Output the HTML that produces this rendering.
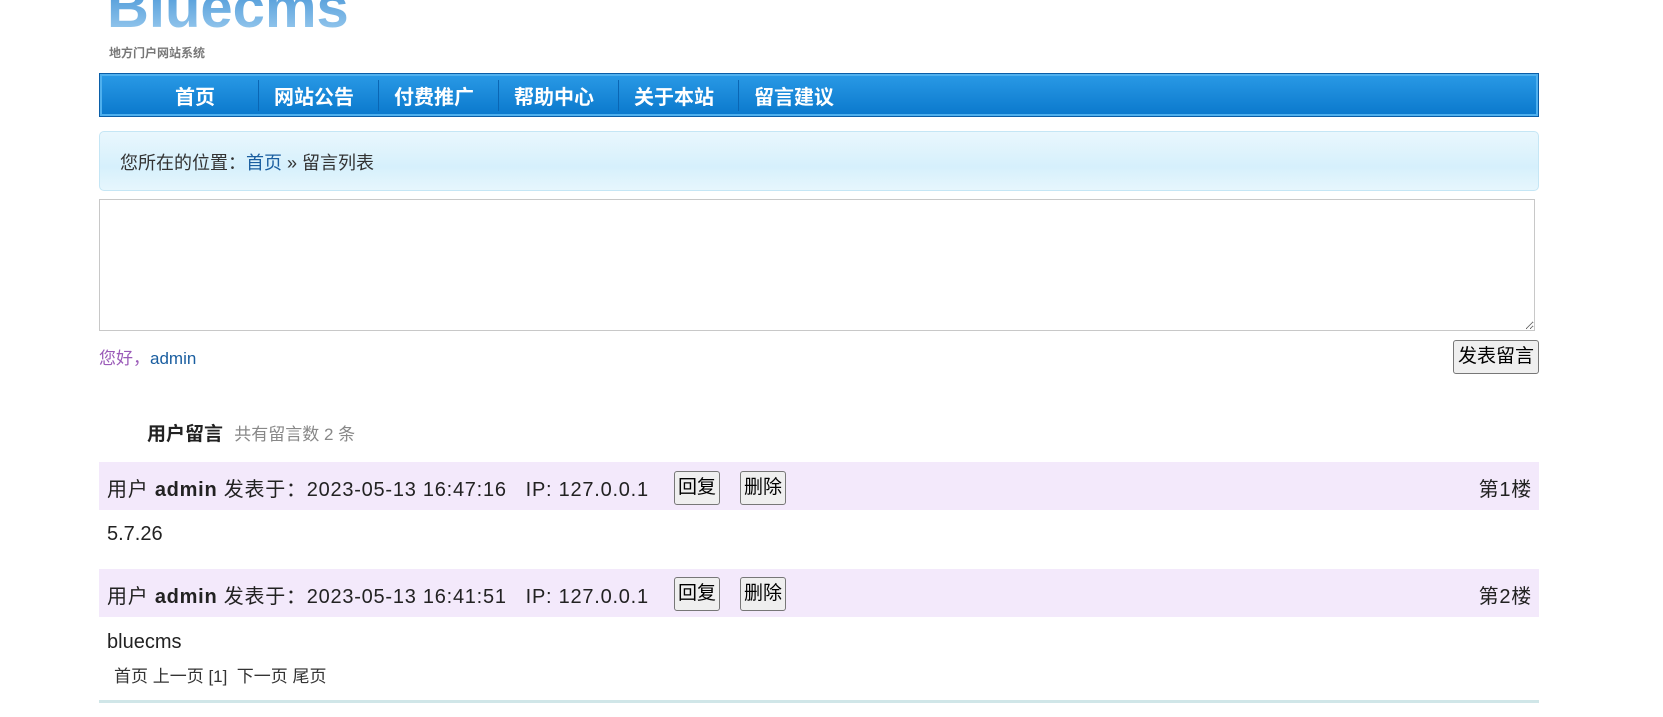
<!DOCTYPE html>
<html><head><meta charset="utf-8"><style>
*{margin:0;padding:0;box-sizing:border-box}
body{width:1663px;height:717px;background:#fff;font-family:"Liberation Sans","Noto Sans CJK SC",sans-serif;color:#333;position:relative;overflow:hidden}
.abs{position:absolute}
.logo{left:107px;top:-26px;font:bold 58px "Liberation Sans",sans-serif;background:linear-gradient(#2f86cf,#a6d2f2);-webkit-background-clip:text;background-clip:text;color:transparent}
.sub{left:109px;top:44px;font-size:12px;color:#777;font-weight:bold}
.nav{left:99px;top:73px;width:1440px;height:44px;background:linear-gradient(#2a9ae6,#0a78cc);border:1px solid #0a5ea8;box-shadow:inset 0 0 0 2px #4fb0ee}
.nav span{position:absolute;top:7px;color:#fff;font-weight:bold;font-size:20px}
.sep{position:absolute;top:6px;width:1px;height:31px;background:#4aa8ea;border-right:1px solid #0a66b4}
.bc{left:99px;top:131px;width:1440px;height:60px;border:1px solid #c5e6f5;border-radius:5px;background:linear-gradient(#e9f7fd,#d6f0fc 60%,#e6f6fd);font-size:18px;padding:17px 0 0 20px}
.bc a{color:#1a5ea0;text-decoration:none}
textarea{position:absolute;left:99px;top:199px;width:1436px;height:132px;border:1px solid #c8c8c8}
.btn{position:absolute;border:1px solid #777;border-radius:3px;background:#efefef;font-size:19px;color:#000;text-align:center}
.row{position:absolute;left:99px;width:1440px;height:48px;background:#f3e9fb;font-size:20px;padding:11px 0 0 8px;color:#222;letter-spacing:0.75px}
.flr{position:absolute;right:7px;top:11px}
</style></head><body>
<div class="abs logo">Bluecms</div>
<div class="abs sub">地方门户网站系统</div>
<div class="abs nav">
<span style="left:75px">首页</span>
<div class="sep" style="left:158px"></div><span style="left:174px">网站公告</span>
<div class="sep" style="left:278px"></div><span style="left:294px">付费推广</span>
<div class="sep" style="left:398px"></div><span style="left:414px">帮助中心</span>
<div class="sep" style="left:518px"></div><span style="left:534px">关于本站</span>
<div class="sep" style="left:638px"></div><span style="left:654px">留言建议</span>
</div>
<div class="abs bc">您所在的位置：<a>首页</a> » 留言列表</div>
<textarea></textarea>
<div class="abs" style="left:99px;top:344px;font-size:17px;color:#9a5ab8">您好，<span style="color:#1a5ea0">admin</span></div>
<div class="btn" style="left:1453px;top:340px;width:86px;height:34px;line-height:32px">发表留言</div>
<div class="abs" style="left:147px;top:419px;font-size:19px;font-weight:bold;color:#222">用户留言 <span style="font-weight:normal;font-size:17px;color:#888;margin-left:6px">共有留言数 2 条</span></div>
<div class="row" style="top:462px">用户 <b>admin</b> 发表于：2023-05-13 16:47:16 &nbsp; IP: 127.0.0.1<span class="flr">第1楼</span></div>
<div class="btn" style="left:674px;top:471px;width:46px;height:34px;line-height:32px">回复</div>
<div class="btn" style="left:740px;top:471px;width:46px;height:34px;line-height:32px">删除</div>
<div class="abs" style="left:107px;top:523px;font-size:20px;color:#222">5.7.26</div>
<div class="row" style="top:569px">用户 <b>admin</b> 发表于：2023-05-13 16:41:51 &nbsp; IP: 127.0.0.1<span class="flr">第2楼</span></div>
<div class="btn" style="left:674px;top:577px;width:46px;height:34px;line-height:32px">回复</div>
<div class="btn" style="left:740px;top:577px;width:46px;height:34px;line-height:32px">删除</div>
<div class="abs" style="left:107px;top:631px;font-size:20px;color:#222">bluecms</div>
<div class="abs" style="left:114px;top:662px;font-size:17px;color:#333">首页 上一页 [1] &nbsp;下一页 尾页</div>
<div class="abs" style="left:99px;top:700px;width:1440px;height:3px;background:#d0e6e8"></div>
</body></html>
